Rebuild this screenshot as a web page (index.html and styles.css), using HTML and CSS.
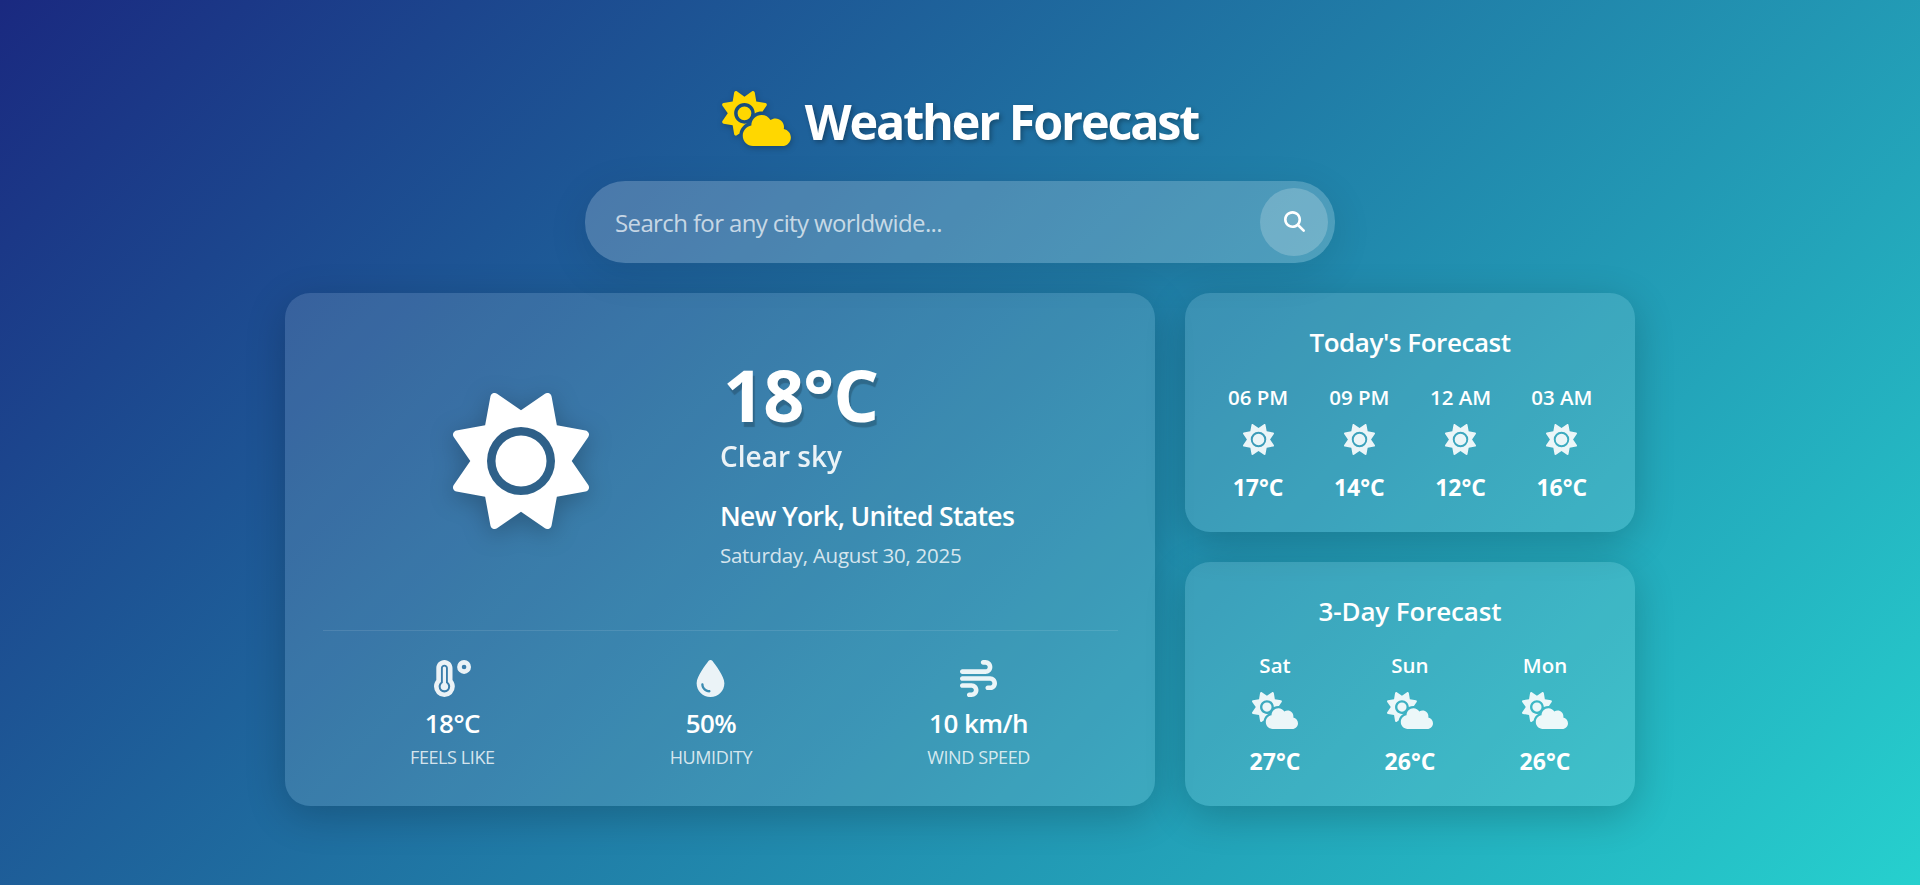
FILE: index.html
```html
<!DOCTYPE html>
<html lang="en">
<head>
<meta charset="utf-8">
<title>Weather Forecast</title>
<link rel="stylesheet" href="styles.css">
</head>
<body>
<svg class="sprite" aria-hidden="true">
  <symbol id="sun" viewBox="0 0 512 512"><path d="M361.5 1.2c5 2.1 8.6 6.6 9.6 11.9L391 121l107.9 19.8c5.3 1 9.8 4.6 11.9 9.6s1.5 10.7-1.6 15.2L446.9 256l62.3 90.3c3.1 4.5 3.7 10.2 1.6 15.2s-6.6 8.6-11.9 9.6L391 391 371.1 498.9c-1 5.3-4.6 9.8-9.6 11.9s-10.7 1.5-15.2-1.6L256 446.9l-90.3 62.3c-4.5 3.1-10.2 3.7-15.2 1.6s-8.6-6.6-9.6-11.9L121 391 13.1 371.1c-5.3-1-9.8-4.6-11.9-9.6s-1.5-10.7 1.6-15.2L65.1 256 2.8 165.7c-3.1-4.5-3.7-10.2-1.6-15.2s6.6-8.6 11.9-9.6L121 121 140.9 13.1c1-5.3 4.6-9.8 9.6-11.9s10.7-1.5 15.2 1.6L256 65.1 346.3 2.8c4.5-3.1 10.2-3.7 15.2-1.6zM160 256a96 96 0 1 1 192 0 96 96 0 1 1 -192 0zm224 0a128 128 0 1 0 -256 0 128 128 0 1 0 256 0z"/></symbol>
  <symbol id="cloud-sun" viewBox="0 0 640 512"><path d="M294.2 1.2c5.1 2.1 8.7 6.7 9.6 12.1l14.1 84.7 84.7 14.1c5.4 .9 10 4.5 12.1 9.6s1.5 10.9-1.6 15.4l-38.5 55c-2.2-.1-4.4-.2-6.7-.2c-23.3 0-45.1 6.2-64 17.1l0-1.1c0-53-43-96-96-96s-96 43-96 96s43 96 96 96c8.1 0 15.900-1 23.400-2.900c-36.600 18.100-63.300 53.100-69.800 94.900l-24.400 17c-4.500 3.200-10.300 3.800-15.400 1.600s-8.700-6.700-9.600-12.100L98.100 317.900 13.400 303.800c-5.400-.9-10-4.500-12.100-9.600s-1.500-10.900 1.600-15.400L52.500 208 2.900 137.200c-3.200-4.500-3.800-10.300-1.600-15.400s6.700-8.700 12.100-9.600L98.100 98.100l14.100-84.700c.9-5.400 4.500-10 9.600-12.100s10.900-1.500 15.400 1.600L208 52.500 278.800 2.900c4.500-3.200 10.300-3.800 15.400-1.600zM144 208a64 64 0 1 1 128 0 64 64 0 1 1 -128 0zM639.9 431.9c0 44.2-35.8 80-80 80l-271.9 0c-53 0-96-43-96-96c0-47.600 34.600-87 80-94.600l0-1.300c0-53 43-96 96-96c34.900 0 65.400 18.600 82.200 46.400c13-9.100 28.800-14.400 45.800-14.400c44.200 0 80 35.800 80 80c0 5.900-.6 11.700-1.900 17.200c37.400 6.700 65.800 39.400 65.800 78.700z"/></symbol>
  <symbol id="wind" viewBox="0 0 512 512"><path d="M288 32c0 17.7 14.3 32 32 32l32 0c17.7 0 32 14.3 32 32s-14.3 32-32 32L32 128c-17.7 0-32 14.3-32 32s14.3 32 32 32l320 0c53 0 96-43 96-96s-43-96-96-96L320 0c-17.7 0-32 14.3-32 32zm64 352c0 17.7 14.3 32 32 32l32 0c53 0 96-43 96-96s-43-96-96-96L32 224c-17.7 0-32 14.3-32 32s14.3 32 32 32l384 0c17.7 0 32 14.3 32 32s-14.3 32-32 32l-32 0c-17.7 0-32 14.3-32 32zM128 512l32 0c53 0 96-43 96-96s-43-96-96-96L32 320c-17.7 0-32 14.3-32 32s14.3 32 32 32l128 0c17.7 0 32 14.3 32 32s-14.3 32-32 32l-32 0c-17.7 0-32 14.3-32 32s14.3 32 32 32z"/></symbol>
  <symbol id="droplet" viewBox="0 0 384 512"><path d="M192 512C86 512 0 426 0 320C0 228.8 130.2 57.7 166.6 11.7C172.6 4.2 181.5 0 191.1 0l1.8 0c9.6 0 18.5 4.2 24.5 11.7C253.8 57.7 384 228.8 384 320c0 106-86 192-192 192zM96 336c0-8.8-7.2-16-16-16s-16 7.2-16 16c0 61.9 50.1 112 112 112c8.8 0 16-7.2 16-16s-7.2-16-16-16c-44.2 0-80-35.8-80-80z"/></symbol>
  <symbol id="temperature" viewBox="0 0 512 512"><path fill-rule="evenodd" d="M144 0C82 0 32 50 32 112V277C12 302 0 333 0 368a144 144 0 0 0 288 0c0-35-12-66-32-91V112C256 50 206 0 144 0zM144 64c-26.500 0-48 21.500-48 48V304c-20 15-32 38-32 64a80 80 0 0 0 160 0c0-26-12-49-32-64V112c0-26.500-21.500-48-48-48zM144 90c-12 0-22 10-22 22V318c-18 8-30 27-30 50a52 52 0 0 0 104 0c0-23-12-42-30-50V112c0-12-10-22-22-22zM416 0a96 96 0 1 0 0 192 96 96 0 1 0 0-192zM416 64a32 32 0 1 1 0 64 32 32 0 1 1 0-64z"/></symbol>
  <symbol id="search" viewBox="0 0 512 512"><path d="M416 208c0 45.900-14.900 88.300-40 122.700L502.600 457.400c12.500 12.500 12.500 32.800 0 45.300s-32.800 12.500-45.300 0L330.700 376c-34.400 25.200-76.800 40-122.700 40C93.100 416 0 322.900 0 208S93.100 0 208 0S416 93.100 416 208zM208 352a144 144 0 1 0 0-288 144 144 0 1 0 0 288z"/></symbol>
</svg>

<div class="app">
  <header class="header">
    <svg class="logo"><use href="#cloud-sun"/></svg>
    <h1 class="title">Weather Forecast</h1>
  </header>

  <form class="search">
    <span class="placeholder">Search for any city worldwide...</span>
    <button class="search-btn" type="button" aria-label="Search"><svg><use href="#search"/></svg></button>
  </form>

  <main class="layout">
    <section class="card current">
      <div class="now">
        <svg class="now-icon"><use href="#sun"/></svg>
        <div class="now-text">
          <div class="now-temp">18°C</div>
          <div class="now-desc">Clear sky</div>
          <div class="now-city">New York, United States</div>
          <div class="now-date">Saturday, August 30, 2025</div>
        </div>
      </div>
      <div class="stats">
        <div class="stat"><svg><use href="#temperature"/></svg><span class="stat-value">18°C</span><span class="stat-label">FEELS LIKE</span></div>
        <div class="stat"><svg><use href="#droplet"/></svg><span class="stat-value">50%</span><span class="stat-label">HUMIDITY</span></div>
        <div class="stat"><svg><use href="#wind"/></svg><span class="stat-value">10 km/h</span><span class="stat-label">WIND SPEED</span></div>
      </div>
    </section>

    <div class="side">
      <section class="card forecast hourly">
        <h2 class="card-title">Today's Forecast</h2>
        <div class="slots">
          <div class="slot"><span class="when">06 PM</span><svg><use href="#sun"/></svg><span class="temp">17°C</span></div>
          <div class="slot"><span class="when">09 PM</span><svg><use href="#sun"/></svg><span class="temp">14°C</span></div>
          <div class="slot"><span class="when">12 AM</span><svg><use href="#sun"/></svg><span class="temp">12°C</span></div>
          <div class="slot"><span class="when">03 AM</span><svg><use href="#sun"/></svg><span class="temp">16°C</span></div>
        </div>
      </section>
      <section class="card forecast daily">
        <h2 class="card-title">3-Day Forecast</h2>
        <div class="slots">
          <div class="slot"><span class="when">Sat</span><svg><use href="#cloud-sun"/></svg><span class="temp">27°C</span></div>
          <div class="slot"><span class="when">Sun</span><svg><use href="#cloud-sun"/></svg><span class="temp">26°C</span></div>
          <div class="slot"><span class="when">Mon</span><svg><use href="#cloud-sun"/></svg><span class="temp">26°C</span></div>
        </div>
      </section>
    </div>
  </main>
</div>
</body>
</html>
```
FILE: styles.css
```css
* { box-sizing: border-box; margin: 0; padding: 0; }

body {
  height: 885px;
  overflow: hidden;
  font-family: "Open Sans", "Noto Sans", sans-serif;
  color: #fff;
  background: linear-gradient(135deg, #1a2980 0%, #26d0ce 100%);
}

svg { display: block; fill: currentColor; }
.sprite { position: absolute; width: 0; height: 0; }

.app { width: 1350px; margin: 0 auto; padding-top: 89px; }

.header { display: flex; align-items: flex-start; justify-content: center; gap: 14px; height: 60px; }
.logo { width: 69px; height: 55px; margin-top: 2px; color: #ffd700; filter: drop-shadow(1px 2px 3px rgba(0, 0, 0, .25)); }
.title { margin-top: 2px; font-size: 48.5px; line-height: 60px; font-weight: 700; letter-spacing: -2.15px; white-space: nowrap; text-shadow: 2px 2px 5px rgba(0, 0, 0, .3); }

.search {
  display: flex;
  align-items: center;
  justify-content: space-between;
  width: 750px;
  height: 82px;
  margin: 32px auto 30px;
  padding: 0 7px 0 30px;
  border-radius: 40px;
  background: rgba(255, 255, 255, .2);
  box-shadow: 0 10px 40px rgba(0, 0, 0, .1);
}
.placeholder { padding-top: 1px; font-size: 24px; letter-spacing: -.62px; color: rgba(255, 255, 255, .7); white-space: nowrap; }
.search-btn {
  display: flex;
  align-items: center;
  justify-content: center;
  width: 68px;
  height: 68px;
  padding-bottom: 2px;
  border: 0;
  border-radius: 50%;
  color: #fff;
  background: rgba(255, 255, 255, .2);
}
.search-btn svg { width: 21px; height: 21px; }

.layout { display: grid; grid-template-columns: 870px 450px; gap: 30px; height: 513px; }
.card {
  border-radius: 25px;
  background: rgba(255, 255, 255, .12);
  box-shadow: 0 10px 40px rgba(0, 0, 0, .2);
}

.current { padding: 0 37.5px; }
.now { display: grid; grid-template-columns: 1fr 1fr; height: 337px; }
.now-icon { width: 136px; height: 136px; margin: 100px auto 0; overflow: visible; filter: drop-shadow(0 5px 12px rgba(0, 0, 0, .25)); }
.now-text { padding-top: 65px; white-space: nowrap; }
.now-temp { padding-left: 3px; font-size: 72px; line-height: 72px; font-weight: 700; letter-spacing: -1px; text-shadow: 2px 5px 1px rgba(0, 0, 0, .2); }
.now-desc { margin-top: 8px; font-size: 28px; line-height: 36px; font-weight: 600; opacity: .9; }
.now-city { margin-top: 24px; font-size: 26.5px; line-height: 36px; font-weight: 600; letter-spacing: -.65px; }
.now-date { margin-top: 7px; font-size: 20.5px; line-height: 28px; letter-spacing: -.28px; color: rgba(255, 255, 255, .8); }

.stats { display: flex; justify-content: space-around; padding-top: 29px; border-top: 1px solid rgba(255, 255, 255, .1); }
.stat { display: flex; flex-direction: column; align-items: center; }
.stat svg { width: 37px; height: 37px; opacity: .9; }
.stat-value { margin-top: 9px; font-size: 26px; line-height: 34px; font-weight: 600; letter-spacing: -.55px; }
.stat-label { margin-top: 4px; font-size: 18px; line-height: 26px; letter-spacing: -.4px; color: rgba(255, 255, 255, .8); }

.side { display: flex; flex-direction: column; gap: 30px; }
.forecast { padding: 31px 22.5px 0; text-align: center; }
.hourly { height: 239px; }
.daily { height: 244px; }
.card-title { font-size: 26px; line-height: 36px; font-weight: 600; letter-spacing: -.45px; }
.slots { display: flex; margin-top: 23px; }
.daily .card-title { letter-spacing: -.15px; }
.daily .slots { margin-top: 22px; }
.slot { flex: 1; display: flex; flex-direction: column; align-items: center; }
.slot svg { opacity: .9; }
.when { font-size: 20.5px; line-height: 28px; font-weight: 600; }
.temp { font-size: 23px; line-height: 30px; font-weight: 700; }
.hourly svg { width: 31px; height: 31px; margin: 13px 0 17px; }
.daily svg { width: 46px; height: 37px; margin: 13px 0 17px; }
```
